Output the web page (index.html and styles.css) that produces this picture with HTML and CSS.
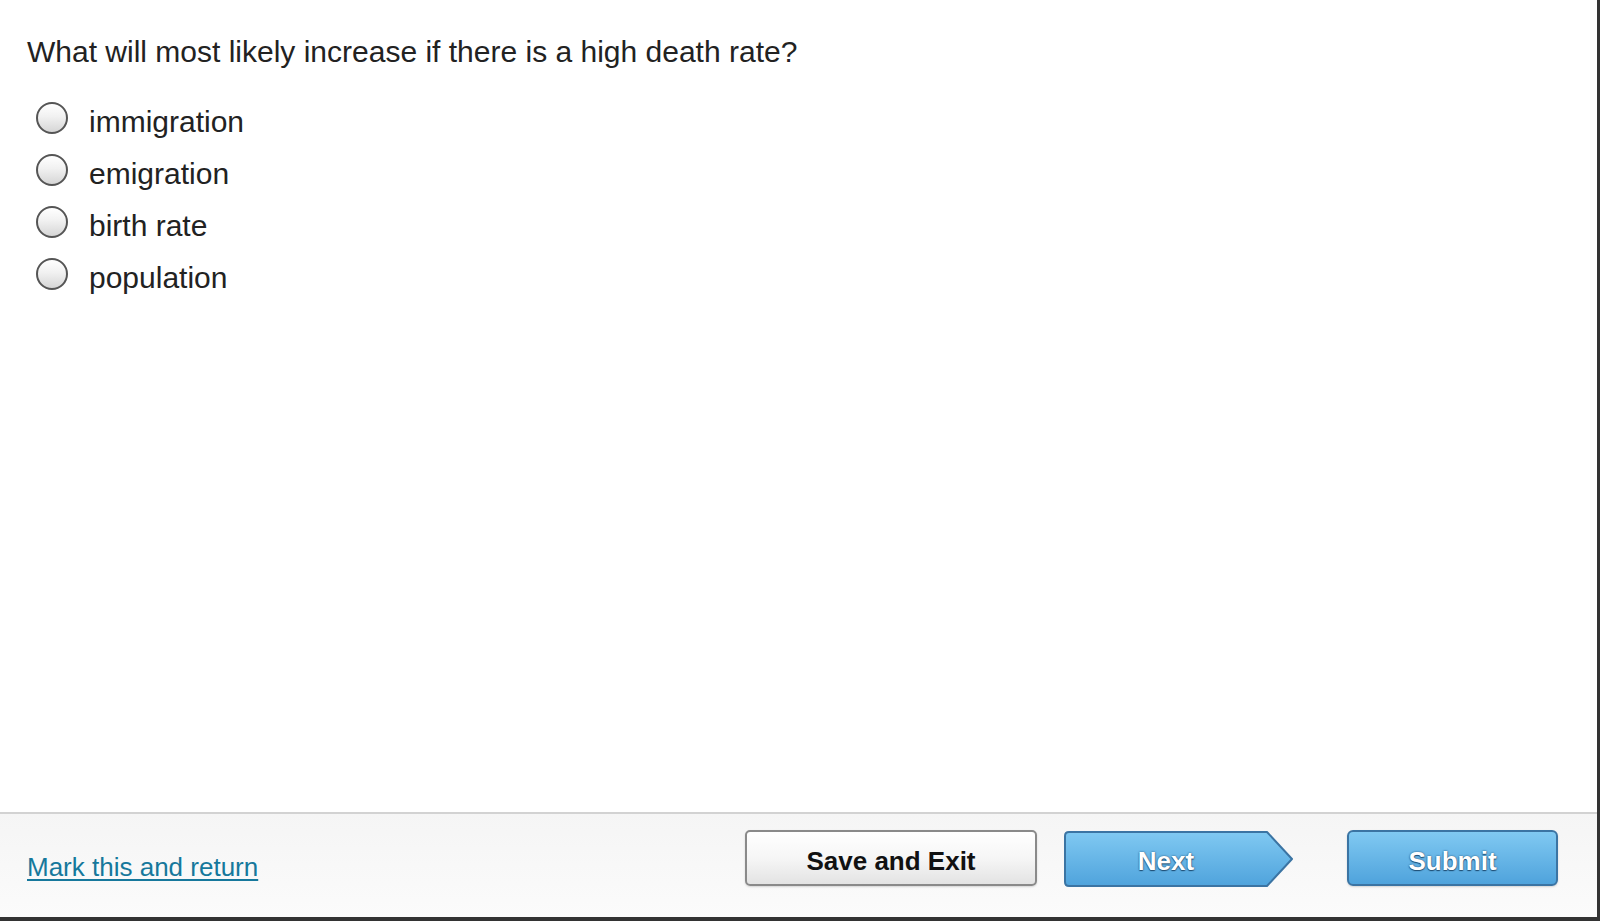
FILE: index.html
```html
<!DOCTYPE html>
<html>
<head>
<meta charset="utf-8">
<link rel="stylesheet" href="styles.css">
</head>
<body>
<div class="frame">
  <main class="main">
    <div class="question">What will most likely increase if there is a high death rate?</div>
    <div class="options">
      <label class="option"><span class="radio"></span><span class="opt-text">immigration</span></label>
      <label class="option"><span class="radio"></span><span class="opt-text">emigration</span></label>
      <label class="option"><span class="radio"></span><span class="opt-text">birth rate</span></label>
      <label class="option"><span class="radio"></span><span class="opt-text">population</span></label>
    </div>
  </main>
  <footer class="footer">
    <a class="mark-link" href="#">Mark this and return</a>
    <button class="btn btn-save">Save and Exit</button>
    <button class="btn-next">
      <svg class="next-shape" width="230" height="56" viewBox="0 0 230 56">
        <defs>
          <linearGradient id="nb" x1="0" y1="0" x2="0" y2="1">
            <stop offset="0" stop-color="#80c9f2"/>
            <stop offset="1" stop-color="#4fa3dc"/>
          </linearGradient>
        </defs>
        <path d="M5,1 H203 L228,28 L203,55 H5 Q1,55 1,51 V5 Q1,1 5,1 Z" fill="url(#nb)" stroke="#3b74a3" stroke-width="2" stroke-linejoin="round"/>
      </svg>
      <span class="next-text">Next</span>
    </button>
    <button class="btn btn-submit">Submit</button>
  </footer>
</div>
</body>
</html>
```
FILE: styles.css
```css
html, body {
  margin: 0;
  padding: 0;
  background: #ffffff;
}

.frame {
  box-sizing: border-box;
  width: 1600px;
  height: 921px;
  display: flex;
  flex-direction: column;
  border-right: 3px solid #333333;
  border-bottom: 4px solid #333333;
  font-family: "Liberation Sans", Arial, Helvetica, sans-serif;
}

.main {
  flex: 1;
  padding: 34px 0 0 27px;
  background: #ffffff;
}

.question {
  font-size: 30px;
  line-height: 36px;
  color: #222222;
}

.options {
  margin-top: 26px;
  display: flex;
  flex-direction: column;
}

.option {
  display: flex;
  align-items: center;
  height: 52px;
}

.radio {
  box-sizing: border-box;
  width: 32px;
  height: 32px;
  margin-left: 9px;
  margin-bottom: 8px;
  border: 2px solid #555555;
  border-radius: 50%;
  background: linear-gradient(to bottom, #ffffff 0%, #f1f1f1 45%, #d6d6d6 100%);
  flex: none;
}

.opt-text {
  margin-left: 21px;
  font-size: 30px;
  line-height: 52px;
  color: #222222;
}

.footer {
  box-sizing: border-box;
  height: 105px;
  border-top: 2px solid #d2d2d2;
  background: linear-gradient(to bottom, #f5f5f5, #fbfbfb);
  display: flex;
  align-items: flex-start;
  padding: 16px 39px 0 27px;
}

.mark-link {
  margin-top: 22px;
  font-size: 26px;
  line-height: 30px;
  color: #16789c;
  text-decoration: underline;
  text-underline-offset: 3px;
  text-decoration-thickness: 2px;
}

.btn {
  box-sizing: border-box;
  height: 56px;
  font-family: "Liberation Sans", Arial, Helvetica, sans-serif;
  font-size: 26px;
  font-weight: bold;
  padding: 6px 0 0 0;
  cursor: pointer;
}

.btn-save {
  margin-left: auto;
  width: 292px;
  border: 2px solid #8a8a8a;
  border-radius: 5px;
  color: #111111;
  background: linear-gradient(to bottom, #ffffff 0%, #f6f6f6 50%, #e3e3e3 100%);
  box-shadow: 0 1px 2px rgba(0, 0, 0, 0.15);
}

.btn-next {
  position: relative;
  margin-left: 27px;
  margin-top: 1px;
  width: 230px;
  height: 56px;
  padding: 5px 26px 0 0;
  border: none;
  background: transparent;
  display: flex;
  align-items: center;
  justify-content: center;
  cursor: pointer;
}

.next-shape {
  position: absolute;
  left: 0;
  top: 0;
}

.next-text {
  position: relative;
  font-family: "Liberation Sans", Arial, Helvetica, sans-serif;
  font-size: 26px;
  font-weight: bold;
  color: #ffffff;
  text-shadow: 0 0 2px #1f4d73, 0 1px 1px #1f4d73;
}

.btn-submit {
  margin-left: 53px;
  width: 211px;
  border: 2px solid #3b74a3;
  border-radius: 6px;
  color: #ffffff;
  background: linear-gradient(to bottom, #80c9f2 0%, #4fa3dc 100%);
  text-shadow: 0 0 2px #1f4d73, 0 1px 1px #1f4d73;
  box-shadow: 0 1px 2px rgba(0, 0, 0, 0.15);
}
```
